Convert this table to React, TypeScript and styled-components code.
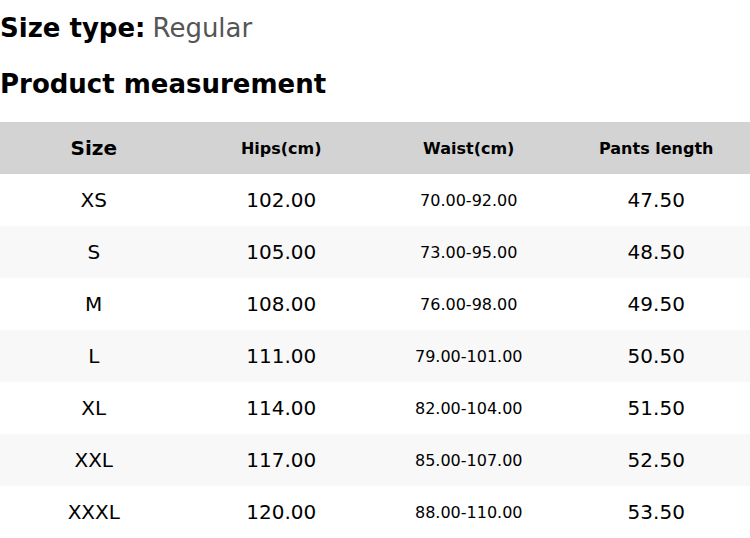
import React from "react";
import styled, { createGlobalStyle } from "styled-components";

const Global = createGlobalStyle`
  html, body { margin: 0; padding: 0; background: #fff; }
  body { font-family: "DejaVu Sans", sans-serif; color: #000; }
`;

const Page = styled.div`
  width: 750px;
  display: flex;
  flex-direction: column;
`;

const SizeType = styled.div`
  font-size: 26px;
  line-height: 56px;
  font-weight: bold;
`;

const SizeValue = styled.span`
  font-weight: normal;
  color: #555;
  margin-left: 7px;
`;

const Heading = styled.div`
  font-size: 26px;
  line-height: 56px;
  font-weight: bold;
  margin-bottom: 10px;
`;

const Row = styled.div<{ $bg: string }>`
  display: grid;
  grid-template-columns: repeat(4, 1fr);
  height: 52px;
  background: ${(p) => p.$bg};
`;

const Cell = styled.div<{ $size: number; $bold?: boolean }>`
  display: flex;
  align-items: center;
  justify-content: center;
  font-size: ${(p) => p.$size}px;
  font-weight: ${(p) => (p.$bold ? "bold" : "normal")};
`;

const rows = [
  ["XS", "102.00", "70.00-92.00", "47.50"],
  ["S", "105.00", "73.00-95.00", "48.50"],
  ["M", "108.00", "76.00-98.00", "49.50"],
  ["L", "111.00", "79.00-101.00", "50.50"],
  ["XL", "114.00", "82.00-104.00", "51.50"],
  ["XXL", "117.00", "85.00-107.00", "52.50"],
  ["XXXL", "120.00", "88.00-110.00", "53.50"],
];

export default function App() {
  return (
    <Page>
      <Global />
      <SizeType>
        Size type:<SizeValue>Regular</SizeValue>
      </SizeType>
      <Heading>Product measurement</Heading>
      <Row $bg="#d3d3d3">
        <Cell $size={20} $bold>Size</Cell>
        <Cell $size={16} $bold>Hips(cm)</Cell>
        <Cell $size={16} $bold>Waist(cm)</Cell>
        <Cell $size={16} $bold>Pants length</Cell>
      </Row>
      {rows.map((r, i) => (
        <Row key={r[0]} $bg={i % 2 === 1 ? "#f8f8f8" : "#fff"}>
          <Cell $size={20}>{r[0]}</Cell>
          <Cell $size={20}>{r[1]}</Cell>
          <Cell $size={16}>{r[2]}</Cell>
          <Cell $size={20}>{r[3]}</Cell>
        </Row>
      ))}
    </Page>
  );
}
